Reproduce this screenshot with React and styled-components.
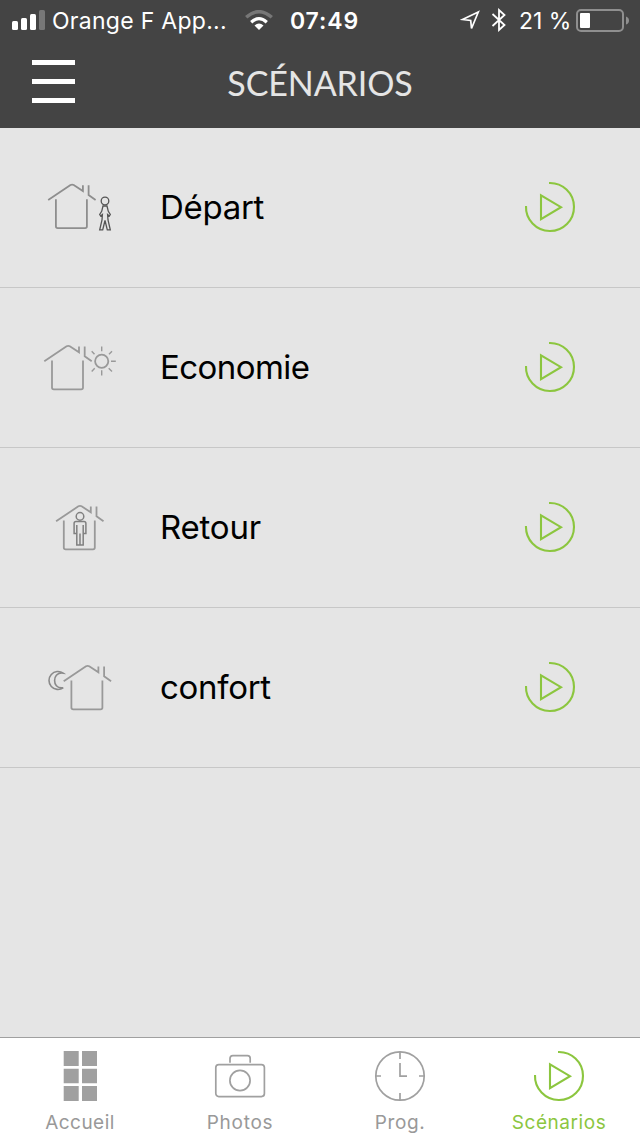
import React from 'react'
import styled, { createGlobalStyle } from 'styled-components';

const GlobalStyle = createGlobalStyle`
    body {
        margin: 0;
        background-color: #e5e5e5;
    }
`;

const Screen = styled.div`
    display: flex;
    flex-direction: column;
    width: 640px;
    height: 1136px;
    overflow: hidden;
    background-color: #e5e5e5;
    font-family: Inter, 'Liberation Sans', sans-serif;
`;

const Header = styled.header`
    height: 128px;
    background-color: #444;
    color: white;
`;

const StatusBar = styled.div`
    display: flex;
    align-items: center;
    height: 40px;
    padding: 0 11px 0 12px;
    box-sizing: border-box;
`;

const StatusText = styled.span`
    width: ${props => props.$width}px;
    margin-left: ${props => props.$left}px;
    padding-top: 2px;
    font-size: 23px;
    line-height: 38px;
    font-weight: ${props => props.$bold ? 600 : 400};
    letter-spacing: ${props => props.$spacing || 0}px;
    white-space: nowrap;
`;

const StatusIcon = styled.svg`
    display: block;
    flex: none;
    margin-left: ${props => props.$left || 0}px;
`;

const NavBar = styled.div`
    display: grid;
    grid-template-columns: 107px 1fr 107px;
    height: 88px;
`;

const MenuButton = styled.button`
    display: flex;
    flex-direction: column;
    gap: 13.5px;
    padding: 20px 32px 0;
    border: none;
    background: none;
    cursor: pointer;
`;

const MenuBar = styled.span`
    width: 43px;
    height: 5.4px;
    background-color: white;
`;

const Title = styled.h1`
    margin: 0;
    color: #e5e5e5;
    font-family: Lato, sans-serif;
    font-size: 34px;
    font-weight: 400;
    line-height: 86px;
    letter-spacing: -0.1px;
    text-align: center;
`;

const List = styled.ul`
    flex: 1;
    margin: 0;
    padding: 0;
    list-style: none;
`;

const Row = styled.li`
    display: flex;
    align-items: center;
    box-sizing: border-box;
    height: 160px;
    padding: 0 64px 2px 40px;
    border-bottom: 1px solid #c7c7c7;
`;

const RowIcon = styled.svg`
    width: 80px;
    height: 60px;
    margin-top: 3px;
    fill: none;
    stroke: #999;
    stroke-width: 1.8;
`;

const RowLabel = styled.span`
    flex: 1;
    margin-left: 40px;
    color: black;
    font-size: 33px;
    line-height: 40px;
    letter-spacing: ${props => props.$spacing || 0}px;
`;

const PlayButton = styled.button`
    padding: 0;
    border: none;
    background: none;
    cursor: pointer;
`;

const PlaySvg = styled.svg`
    display: block;
    width: 52px;
    height: 52px;
    fill: none;
    stroke: #8cc63f;
    stroke-width: 2.1;
`;

const TabBar = styled.nav`
    display: grid;
    grid-template-columns: 160px 160px 160px 158px;
    height: 98px;
    border-top: 1px solid #a0a0a0;
    background-color: white;
`;

const Tab = styled.a`
    display: flex;
    flex-direction: column;
    align-items: center;
    padding-top: 12px;
    color: ${props => props.$active ? '#8cc63f' : '#999'};
`;

const TabIcon = styled.svg`
    width: 52px;
    height: 52px;
    fill: none;
    stroke: #a0a0a0;
    stroke-width: 1.7;
`;

const TabLabel = styled.span`
    margin-top: 9px;
    font-size: 19px;
    line-height: 24px;
    letter-spacing: ${props => props.$spacing}px;
`;

const House = ({ x = 0, y = 0 }) => (
    <path
        transform={`translate(${x} ${y})`}
        d="M4.3 23.3L26.6 8.3Q28.2 7.3 29.8 8.3L39 14.3V8.5M44.7 8.5V18.3L51.7 23.3M12 22.5V49.5Q12 51.3 13.8 51.3H41.2Q43 51.3 43 49.5V22.5"
    />
);

const LeavingIcon = () => (
    <RowIcon viewBox="0 0 80 60">
        <g stroke="#8e8e8e">
            <House x={3.9} y={-1.2} />
        </g>
        <g stroke="#555" strokeWidth="1.3">
            <circle cx="65" cy="23" r="3.8" />
            <path d="M63 28H67L68.3 33.3L70.3 36.5L69.3 38L67.6 36.5L68 42L70.3 51.8H67.3L65 42.5L62.7 51.8H59.7L62 42L62.4 36.5L60.7 38L59.7 36.5L61.7 33.3Z" />
        </g>
    </RowIcon>
);

const SunIcon = () => (
    <RowIcon viewBox="0 0 80 60">
        <House />
        <circle cx="61.7" cy="23.3" r="6.6" />
        <path d="M61.7 8.5V13.3M61.7 32.3V37.5M71 23.3H75.8M69 16.3L72 13.3M54.5 16.3L51.7 13.3M68.7 30.3L72 33.5M54.7 30.3L51.7 33.5" strokeWidth="1.4" />
    </RowIcon>
);

const HomeIcon = () => (
    <RowIcon viewBox="0 0 80 60">
        <House x={11.8} />
        <g stroke="#808080" strokeWidth="1.5">
            <circle cx="40" cy="18.4" r="3.8" />
            <path d="M36 23.6H44Q45.9 23.6 45.9 25.5V35.6H43.2V27V47H36.8V27V35.6H34.1V25.5Q34.1 23.6 36 23.6ZM40 35.6V47" />
        </g>
    </RowIcon>
);

const MoonIcon = () => (
    <RowIcon viewBox="0 0 80 60">
        <House x={19.4} />
        <path d="M23.2 15.1A9 9 0 1 0 23.2 29.8C16.5 30.6 14.6 26 14.6 22.4C14.6 19 16.5 14.4 23.2 15.1Z" stroke="#8a8a8a" strokeWidth="1.6" />
    </RowIcon>
);

const PlayIcon = () => (
    <PlaySvg viewBox="0 0 52 52">
        <path d="M25 2A24 24 0 1 1 2 25" />
        <path d="M17 14.3V38.1L37 26.2Z" />
    </PlaySvg>
);

const GridIcon = () => (
    <TabIcon viewBox="0 0 52 52">
        <path
            d="M9.7 1h15v15h-15zM28 1h15v15h-15zM9.7 18.7h15v14.6h-15zM28 18.7h15v14.6h-15zM9.7 36h15v15h-15zM28 36h15v15h-15z"
            fill="#a0a0a0"
            stroke="none"
        />
    </TabIcon>
);

const CameraIcon = () => (
    <TabIcon viewBox="0 0 52 52">
        <rect x="1.8" y="14.6" width="48.6" height="32" rx="3" />
        <path d="M16 12.8V8.5Q16 5.7 18.8 5.7H33.5Q36.2 5.7 36.2 8.5V12.8" />
        <circle cx="26" cy="30.5" r="10.1" />
    </TabIcon>
);

const ClockIcon = () => (
    <TabIcon viewBox="0 0 52 52">
        <circle cx="26" cy="26" r="24.2" />
        <path d="M26 2V9M26 43V50M2 26H7M45 26H50M26 13V26.2H33" />
    </TabIcon>
);

const scenarios = [
    { name: 'Départ', Icon: LeavingIcon, spacing: -0.3 },
    { name: 'Economie', Icon: SunIcon, spacing: -0.55 },
    { name: 'Retour', Icon: HomeIcon, spacing: -0.2 },
    { name: 'confort', Icon: MoonIcon, spacing: -0.3 },
];

const tabs = [
    { name: 'Accueil', Icon: GridIcon, spacing: 0.45 },
    { name: 'Photos', Icon: CameraIcon, spacing: 0.75 },
    { name: 'Prog.', Icon: ClockIcon, spacing: 0.6 },
    { name: 'Scénarios', Icon: PlayIcon, spacing: 0.55, active: true },
];

export default function App() {
  return (
    <Screen>
        <GlobalStyle />
        <Header>
            <StatusBar>
                <StatusIcon width="33" height="20" fill="white">
                    <rect x="0" y="11" width="6" height="9" rx="1.5" />
                    <rect x="9" y="8" width="6" height="12" rx="1.5" />
                    <rect x="18" y="4" width="6" height="16" rx="1.5" />
                    <rect x="27" y="0" width="6" height="20" rx="1.5" fill="#777" />
                </StatusIcon>
                <StatusText $left={7} $width={176} $spacing={0.28}>Orange F App...</StatusText>
                <StatusIcon $left={17} width="28" height="20" viewBox="0 0 28 20">
                    <path d="M14 20L9.5 15.5Q14 11.5 18.5 15.5Z" fill="white" />
                    <path d="M6.2 12.2Q14 5.2 21.8 12.2" fill="none" stroke="white" strokeWidth="3.2" />
                    <path d="M1.2 7.3Q14 -4 26.8 7.3" fill="none" stroke="#777" strokeWidth="3.4" />
                </StatusIcon>
                <StatusText $left={17} $width={170} $spacing={0.9} $bold>07:49</StatusText>
                <StatusIcon width="20" height="24" viewBox="0 0 20 24" fill="none" stroke="white" strokeWidth="1.7">
                    <path d="M18.3 4L2.5 11.5L10.7 12.5L11.5 20.5Z" />
                </StatusIcon>
                <StatusIcon $left={11} width="16" height="24" viewBox="0 0 16 24" fill="none" stroke="white" strokeWidth="1.8">
                    <path d="M1.5 6L13.5 17L8 22V2L13.5 7L1.5 18" />
                </StatusIcon>
                <StatusText $left={12} $width={57}>21 %</StatusText>
                <StatusIcon width="53" height="24" viewBox="0 0 53 24">
                    <rect x="1" y="2" width="46" height="21" rx="4" fill="none" stroke="#8f8f8f" strokeWidth="2" />
                    <rect x="4" y="5" width="10" height="15" rx="1" fill="white" />
                    <path d="M50 8.5Q53 9.5 53 12.5T50 16.5Z" fill="#8f8f8f" />
                </StatusIcon>
            </StatusBar>
            <NavBar>
                <MenuButton aria-label="Menu">
                    <MenuBar />
                    <MenuBar />
                    <MenuBar />
                </MenuButton>
                <Title>SCÉNARIOS</Title>
            </NavBar>
        </Header>
        <List>
            {scenarios.map(({ name, Icon, spacing }) => (
                <Row key={name}>
                    <Icon />
                    <RowLabel $spacing={spacing}>{name}</RowLabel>
                    <PlayButton aria-label={name}>
                        <PlayIcon />
                    </PlayButton>
                </Row>
            ))}
        </List>
        <TabBar>
            {tabs.map(({ name, Icon, spacing, active }) => (
                <Tab key={name} $active={active}>
                    <Icon />
                    <TabLabel $spacing={spacing}>{name}</TabLabel>
                </Tab>
            ))}
        </TabBar>
    </Screen>
  )
}
